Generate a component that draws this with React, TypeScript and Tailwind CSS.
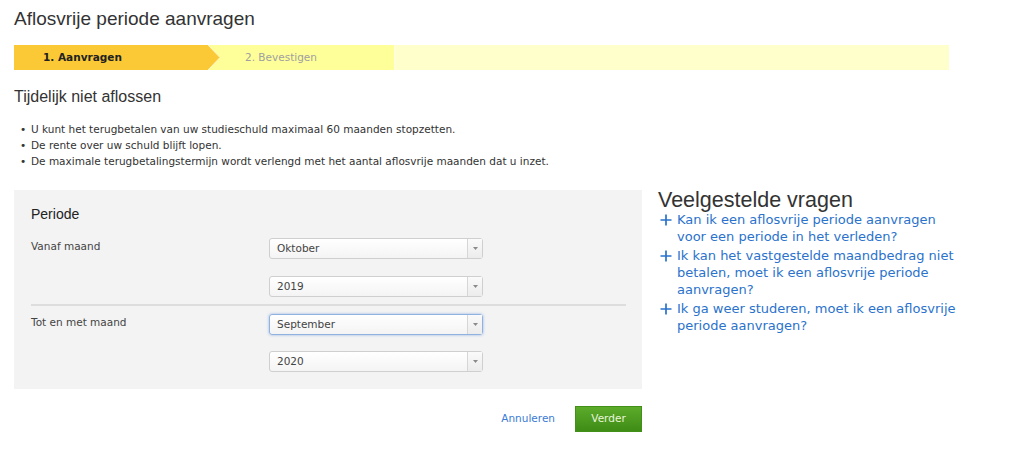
const body = "font-['DejaVu_Sans',Verdana,sans-serif]";
const head = "font-['Liberation_Sans',Arial,sans-serif]";

function Select({ value, focused }: { value: string; focused?: boolean }) {
    return (
        <div
            className={
                "flex h-[21px] w-[214px] items-stretch rounded-[3px] border bg-gradient-to-b from-white to-[#f4f4f4] " +
                (focused ? "border-[#8fb2e0] shadow-[0_0_3px_rgba(90,140,220,0.6)]" : "border-[#cfcfcf]")
            }
        >
            <div className="flex flex-1 items-center pl-[7px] text-[10.5px] text-[#444]">{value}</div>
            <div className="flex w-[15px] items-center justify-center border-l border-[#d6d6d6] bg-gradient-to-b from-[#fafafa] to-[#ececec]">
                <svg width="5" height="3" viewBox="0 0 5 3">
                    <polygon points="0,0 5,0 2.5,3" fill="#8a8a8a" />
                </svg>
            </div>
        </div>
    );
}

function Faq({ children }: { children: React.ReactNode }) {
    return (
        <a className="flex cursor-pointer gap-[5px] text-[13px] leading-[17px] text-[#2a72cc]">
            <svg className="mt-[3px] shrink-0" width="12" height="12" viewBox="0 0 12 12">
                <path d="M6 0.5V11.5M0.5 6H11.5" stroke="#2a72cc" strokeWidth="1.7" />
            </svg>
            <span>{children}</span>
        </a>
    );
}

export default function App() {
    return (
        <div className={"min-h-[460px] w-[1024px] bg-white px-[14px] pt-[8px] text-[#333] " + body}>
            <h1 className={"text-[19px] leading-[22px] text-[#333] " + head}>Aflosvrije periode aanvragen</h1>

            {/* Stappen */}
            <div className="mt-[15px] flex h-[25px] w-[935px] bg-[#ffffcc]">
                <div className="flex w-[189px] items-center bg-[#fbc935] pl-[29px] text-[10.5px] font-bold text-[#222]">
                    1. Aanvragen
                </div>
                <svg width="18" height="25" viewBox="0 0 18 25" className="bg-[#ffff99]">
                    <polygon points="0,0 5,0 17,12.5 5,25 0,25" fill="#fbc935" />
                    <polyline points="5,0 17,12.5 5,25" fill="none" stroke="#fff6cc" strokeWidth="1" />
                </svg>
                <div className="flex w-[173px] items-center bg-[#ffff99] pl-[24px] text-[10.5px] text-[#a0a0a0]">
                    2. Bevestigen
                </div>
                <div className="w-px bg-[#fffbe6]" />
            </div>

            <h2 className={"mt-[17px] text-[16px] leading-[20px] text-[#333] " + head}>Tijdelijk niet aflossen</h2>

            <ul className="mt-[14px] text-[10.5px] leading-[16px] text-[#333]">
                {[
                    "U kunt het terugbetalen van uw studieschuld maximaal 60 maanden stopzetten.",
                    "De rente over uw schuld blijft lopen.",
                    "De maximale terugbetalingstermijn wordt verlengd met het aantal aflosvrije maanden dat u inzet.",
                ].map((t) => (
                    <li key={t} className="flex">
                        <span className="w-[17px] pl-[6px]">•</span>
                        {t}
                    </li>
                ))}
            </ul>

            <div className="mt-[21px] flex items-start gap-[16px]">
                <div className="w-[628px]">
                    <div className="bg-[#f3f3f3] pb-[17px] pl-[17px] pr-[16px] pt-[16px]">
                        <h3 className={"text-[14px] leading-[16px] text-[#222] " + head}>Periode</h3>
                        <div className="mt-[16px] flex">
                            <div className="w-[238px] pt-[1px] text-[10.5px] leading-[14px] text-[#444]">Vanaf maand</div>
                            <div className="flex flex-col gap-[17px]">
                                <Select value="Oktober" />
                                <Select value="2019" />
                            </div>
                        </div>
                        <div className="mt-[7px] h-[2px] bg-[#dddddd]" />
                        <div className="mt-[8px] flex">
                            <div className="w-[238px] pt-[1px] text-[10.5px] leading-[14px] text-[#444]">Tot en met maand</div>
                            <div className="flex flex-col gap-[16px]">
                                <Select value="September" focused />
                                <Select value="2020" />
                            </div>
                        </div>
                    </div>

                    <div className="mt-[17px] flex items-center justify-end gap-[20px]">
                        <a className="text-[10.5px] text-[#3a7bd5]">Annuleren</a>
                        <button className="h-[26px] w-[67px] border border-[#42901a] bg-gradient-to-b from-[#5cab2a] to-[#3f8c16] text-[10.5px] text-[#eaf6dc]">
                            Verder
                        </button>
                    </div>
                </div>

                <div className="w-[300px]">
                    <h2 className={"text-[21.5px] leading-[20px] text-[#333] " + head}>Veelgestelde vragen</h2>
                    <div className="mt-[1px] flex flex-col gap-[2px] pl-[2px]">
                        <Faq>Kan ik een aflosvrije periode aanvragen voor een periode in het verleden?</Faq>
                        <Faq>Ik kan het vastgestelde maandbedrag niet betalen, moet ik een aflosvrije periode aanvragen?</Faq>
                        <Faq>Ik ga weer studeren, moet ik een aflosvrije periode aanvragen?</Faq>
                    </div>
                </div>
            </div>
        </div>
    );
}
